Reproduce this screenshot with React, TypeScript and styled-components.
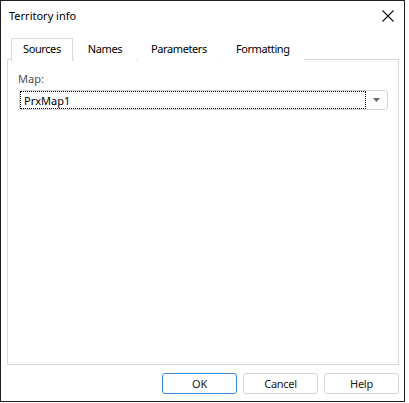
import React from "react";
import styled, { createGlobalStyle } from "styled-components";

const Global = createGlobalStyle`
  html, body { margin: 0; padding: 0; background: #ffffff; }
  body { font-family: "Noto Sans", "Open Sans", Arial, sans-serif; font-size: 11px; color: #1a1a1a; }
  * { box-sizing: border-box; }
`;

const Window = styled.div`
  width: 405px;
  height: 402px;
  border: 1px solid #1f1f1f;
  background: #ffffff;
  display: flex;
  flex-direction: column;
`;

const TitleBar = styled.div`
  height: 37px;
  display: flex;
  align-items: flex-start;
  justify-content: space-between;
  padding: 7px 8px 0 8px;
`;

const Title = styled.div`
  font-size: 11px;
  line-height: 16px;
  color: #000;
`;

const CloseButton = styled.div`
  width: 14px;
  height: 14px;
  margin-top: 1px;
  margin-right: 1px;
  display: flex;
  align-items: center;
  justify-content: center;
`;

const Body = styled.div`
  flex: 1;
  display: flex;
  flex-direction: column;
  padding: 0 5px 0 6px;
`;

const TabStrip = styled.div`
  display: flex;
  height: 22px;
  padding-left: 4px;
  position: relative;
  z-index: 1;
`;

const Tab = styled.div<{ $active?: boolean }>`
  height: ${(p) => (p.$active ? "23px" : "22px")};
  padding: 0 ${(p) => (p.$active ? "11px" : "13px")} 3px;
  margin-left: ${(p) => (p.$active ? "0" : "1px")};
  display: flex;
  align-items: center;
  font-size: 11px;
  letter-spacing: -0.4px;
  color: #000;
  background: #fff;
  border: 1px solid ${(p) => (p.$active ? "#d9d9d9" : "transparent")};
  border-bottom: none;
`;

const Panel = styled.div`
  height: 306px;
  border: 1px solid #d9d9d9;
  margin-top: -1px;
  padding: 11px 10px 0 10px;
  display: flex;
  flex-direction: column;
`;

const FieldLabel = styled.div`
  font-size: 11px;
  line-height: 16px;
  color: #505050;
  margin-bottom: 3px;
`;

const Combo = styled.div`
  height: 20px;
  border: 1px solid #d4d4d4;
  border-radius: 3px;
  display: flex;
  align-items: stretch;
  margin-left: 1px;
`;

const ComboValue = styled.div`
  flex: 1;
  border: 1px dotted #000;
  padding-left: 3px;
  display: flex;
  align-items: center;
  font-size: 11px;
  color: #000;
`;

const ComboArrow = styled.div`
  width: 21px;
  display: flex;
  align-items: center;
  justify-content: center;
`;

const Footer = styled.div`
  display: flex;
  justify-content: flex-end;
  gap: 6px;
  padding-top: 8px;
`;

const Button = styled.div<{ $primary?: boolean }>`
  width: 75px;
  height: 21px;
  border: 1px solid ${(p) => (p.$primary ? "#3c8fd7" : "#d4d4d4")};
  border-radius: 3px;
  display: flex;
  align-items: center;
  justify-content: center;
  font-size: 11px;
  letter-spacing: -0.3px;
  color: #1a1a1a;
  background: #fff;
`;

export default function App() {
  return (
    <>
      <Global />
      <Window>
        <TitleBar>
          <Title>Territory info</Title>
          <CloseButton>
            <svg width="12" height="12" viewBox="0 0 12 12">
              <path d="M0.5 0.5 L11.5 11.5 M11.5 0.5 L0.5 11.5" stroke="#111" strokeWidth="1.1" fill="none" />
            </svg>
          </CloseButton>
        </TitleBar>
        <Body>
          <TabStrip>
            <Tab $active>Sources</Tab>
            <Tab>Names</Tab>
            <Tab>Parameters</Tab>
            <Tab>Formatting</Tab>
          </TabStrip>
          <Panel>
            <FieldLabel>Map:</FieldLabel>
            <Combo>
              <ComboValue>PrxMap1</ComboValue>
              <ComboArrow>
                <svg width="7" height="4" viewBox="0 0 7 4">
                  <path d="M0 0 L7 0 L3.5 4 Z" fill="#666" />
                </svg>
              </ComboArrow>
            </Combo>
          </Panel>
          <Footer>
            <Button $primary>OK</Button>
            <Button>Cancel</Button>
            <Button>Help</Button>
          </Footer>
        </Body>
      </Window>
    </>
  );
}
